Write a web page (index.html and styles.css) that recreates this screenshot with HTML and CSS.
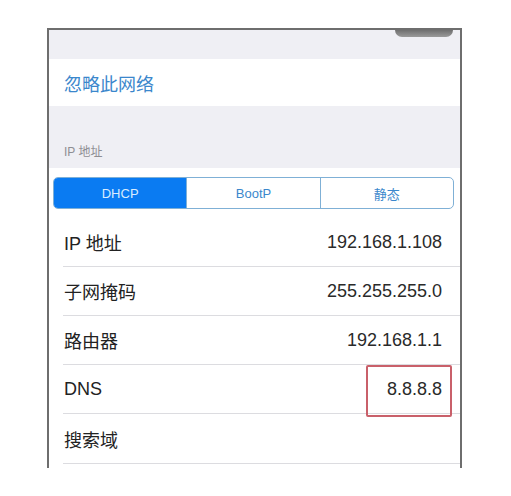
FILE: index.html
```html
<!DOCTYPE html>
<html lang="zh-CN">
<head>
<meta charset="utf-8">
<link rel="stylesheet" href="styles.css">
</head>
<body>
<div class="frame">
  <div class="top-band"><span class="top-tab"></span></div>
  <div class="forget">忽略此网络</div>
  <div class="section-head">IP 地址</div>
  <div class="seg-wrap">
    <div class="seg">
      <div class="seg-item active">DHCP</div>
      <div class="seg-item">BootP</div>
      <div class="seg-item">静态</div>
    </div>
  </div>
  <div class="row"><span class="label">IP 地址</span><span class="value">192.168.1.108</span></div>
  <div class="row"><span class="label">子网掩码</span><span class="value">255.255.255.0</span></div>
  <div class="row"><span class="label">路由器</span><span class="value">192.168.1.1</span></div>
  <div class="row"><span class="label">DNS</span><span class="value marked">8.8.8.8</span></div>
  <div class="row last"><span class="label">搜索域</span><span class="value"></span></div>
  <div class="tail"></div>
</div>
</body>
</html>
```
FILE: styles.css
```css
html, body {
  margin: 0;
  padding: 0;
  background: #ffffff;
}
body {
  font-family: "Liberation Sans", "Noto Sans CJK SC", sans-serif;
  color: #222222;
}
.frame {
  margin: 28px 0 0 47px;
  width: 411px;
  border: 2px solid #6e6e6e;
  border-bottom: none;
  background: #ffffff;
}
.top-band {
  position: relative;
  height: 29px;
  background: #efeff4;
}
.top-tab {
  position: absolute;
  left: 346px;
  top: 0;
  width: 58px;
  height: 7px;
  background: linear-gradient(#6f6f6f, #9a9a9a);
  border-radius: 0 0 9px 9px;
}
.forget {
  height: 47px;
  display: flex;
  align-items: center;
  padding-left: 15px;
  font-size: 18px;
  color: #3b87cc;
  background: #ffffff;
}
.section-head {
  height: 62px;
  box-sizing: border-box;
  display: flex;
  align-items: flex-end;
  padding: 0 0 9px 15px;
  font-size: 12px;
  color: #8e8e93;
  background: #efeff4;
}
.seg-wrap {
  height: 50px;
  box-sizing: border-box;
  padding: 9px 6px 0 4px;
}
.seg {
  display: flex;
  height: 32px;
  box-sizing: border-box;
  border: 1.5px solid #7fb0d6;
  border-radius: 5px;
  overflow: hidden;
}
.seg-item {
  flex: 1;
  display: flex;
  align-items: center;
  justify-content: center;
  font-size: 13px;
  color: #3b87cc;
  border-left: 1.5px solid #7fb0d6;
}
.seg-item:first-child {
  border-left: none;
}
.seg-item.active {
  background: #0a7bf2;
  color: #d9ecff;
}
.row {
  height: 49px;
  box-sizing: border-box;
  margin-left: 14px;
  padding: 0 18px 0 1px;
  display: flex;
  align-items: center;
  justify-content: space-between;
  border-bottom: 1px solid #dcdce0;
  font-size: 18px;
}
.row.last {
  height: 50px;
}
.value {
  position: relative;
  color: #2a2a2a;
}
.marked::after {
  content: "";
  position: absolute;
  left: -21px;
  right: -10px;
  top: -14px;
  bottom: -17px;
  border: 2px solid #c9606a;
  border-radius: 2px;
}
.tail {
  height: 4px;
}
```
